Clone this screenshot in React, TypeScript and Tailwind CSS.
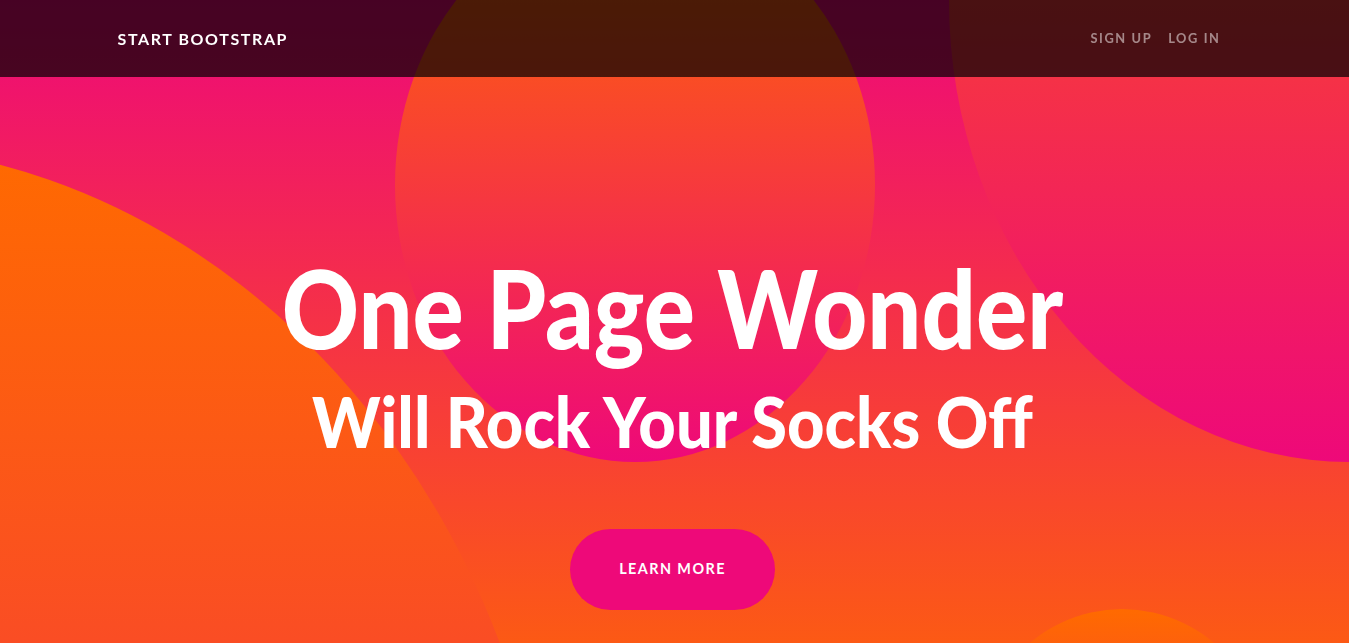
import { useState } from 'react';

// ── Nav data ────────────────────────────────────────────────
const NAV_LINKS = ['Sign Up', 'Log In'];

// ── Navbar (fixed over the masthead) ───────────────────────
function Navbar() {
  return (
    <nav className="fixed inset-x-0 top-0 z-20 h-[77px] bg-black/70">
      <div className="mx-auto flex h-full max-w-[1140px] items-center justify-between pl-[13px] pr-[16px]">
        <a
          href="#"
          className="text-[16px] font-bold uppercase tracking-[0.1rem] text-white"
        >
          Start Bootstrap
        </a>
        <ul className="flex items-center">
          {NAV_LINKS.map((label) => (
            <li key={label}>
              <a
                href="#"
                className="block px-2 text-[12.8px] font-bold uppercase tracking-[0.1rem] text-white/50"
              >
                {label}
              </a>
            </li>
          ))}
        </ul>
      </div>
    </nav>
  );
}

// ── Masthead ────────────────────────────────────────────────
function Masthead() {
  const [hover, setHover] = useState(false);

  return (
    <header className="relative h-[776px] overflow-hidden bg-linear-to-t/srgb from-[#ff6a00] to-[#ee0979]">
      {/* background circles */}
      <div className="absolute left-[-880px] top-[144px] h-[1664px] w-[1440px] rounded-[50%] bg-linear-to-b/srgb from-[#ff6a00] to-[#ee0979]" />
      <div className="absolute left-[949px] top-[-462px] h-[924px] w-[800px] rounded-[50%] bg-linear-to-b/srgb from-[#ff6a00] to-[#ee0979]" />
      <div className="absolute left-[962px] top-[609px] h-[370px] w-[320px] rounded-[50%] bg-linear-to-b/srgb from-[#ff6a00] to-[#ee0979]" />
      <div className="absolute left-[395px] top-[-92px] h-[554px] w-[480px] rounded-[50%] bg-linear-to-b/srgb from-[#ff6a00] to-[#ee0979]" />

      {/* content */}
      <div className="relative z-10 flex flex-col items-center pr-[4px] pt-[260px] text-center text-white">
        <h1 className="scale-y-[1.14] text-[95.5px] font-black leading-none">
          One Page Wonder
        </h1>
        <h2 className="mt-[33px] scale-y-[1.08] text-[65px] font-black leading-none">
          Will Rock Your Socks Off
        </h2>
        <a
          href="#"
          onMouseEnter={() => setHover(true)}
          onMouseLeave={() => setHover(false)}
          className={`mt-[75px] flex h-[81px] w-[205px] items-center justify-center rounded-full text-[14.4px] font-bold uppercase tracking-[0.1em] text-white ${hover ? 'bg-[#d60a6c]' : 'bg-[#ee0979]'}`}
        >
          Learn More
        </a>
      </div>
    </header>
  );
}

export default function App() {
  return (
    <div className="min-h-screen font-['Lato',sans-serif]">
      <Navbar />
      <Masthead />
    </div>
  );
}
